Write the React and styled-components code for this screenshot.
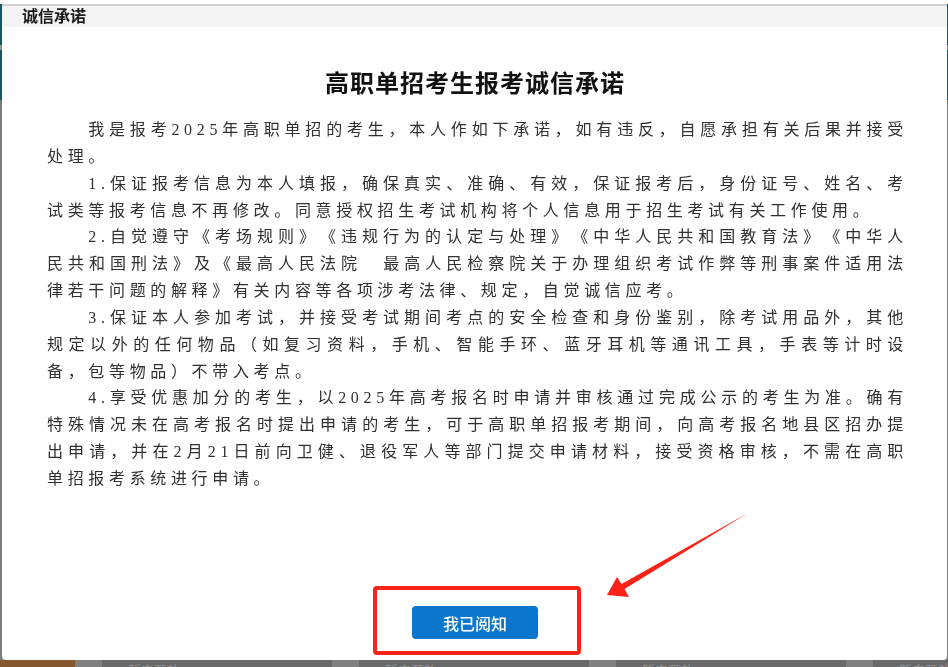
import styled, { createGlobalStyle } from "styled-components";

const GlobalStyle = createGlobalStyle`
  html, body {
    margin: 0;
    padding: 0;
    background: #ffffff;
    overflow: hidden;
  }
  * {
    box-sizing: border-box;
  }
`;

const promises = [
  "我是报考2025年高职单招的考生，本人作如下承诺，如有违反，自愿承担有关后果并接受处理。",
  "1.保证报考信息为本人填报，确保真实、准确、有效，保证报考后，身份证号、姓名、考试类等报考信息不再修改。同意授权招生考试机构将个人信息用于招生考试有关工作使用。",
  "2.自觉遵守《考场规则》《违规行为的认定与处理》《中华人民共和国教育法》《中华人民共和国刑法》及《最高人民法院\u3000最高人民检察院关于办理组织考试作弊等刑事案件适用法律若干问题的解释》有关内容等各项涉考法律、规定，自觉诚信应考。",
  "3.保证本人参加考试，并接受考试期间考点的安全检查和身份鉴别，除考试用品外，其他规定以外的任何物品（如复习资料，手机、智能手环、蓝牙耳机等通讯工具，手表等计时设备，包等物品）不带入考点。",
  "4.享受优惠加分的考生，以2025年高考报名时申请并审核通过完成公示的考生为准。确有特殊情况未在高考报名时提出申请的考生，可于高职单招报考期间，向高考报名地县区招办提出申请，并在2月21日前向卫健、退役军人等部门提交申请材料，接受资格审核，不需在高职单招报考系统进行申请。",
];

/* ---------- page behind the dialog ---------- */

const Page = styled.div`
  height: 667px;
  display: flex;
  flex-direction: column;
  background: #7e7e7e;
`;

const TopGap = styled.div`
  height: 4px;
  background: #ffffff;
`;

const NavBar = styled.div`
  height: ${(props) => props.h}px;
  background: #0f5a68;
`;

const NavDivider = styled.div`
  height: 5px;
  background: #8e8e8e;
`;

const Main = styled.div`
  flex: 1;
  background: #7e7e7e;
`;

const TileRow = styled.div`
  height: 7px;
  display: flex;
  overflow: hidden;
`;

const CountTile = styled.div`
  width: 75px;
  flex-shrink: 0;
  background: #86582f;
`;

const Tile = styled.div`
  width: 257px;
  flex-shrink: 0;
  display: flex;
`;

const TileStripe = styled.div`
  width: 27px;
  background: #808080;
`;

const TileBody = styled.div`
  flex: 1;
  background: #696969;
  padding: 2px 0 0 26px;
  color: #8e8e8e;
  font: 13px/16px "Noto Sans CJK SC", sans-serif;
`;

/* ---------- dialog ---------- */

const Overlay = styled.div`
  position: fixed;
  inset: 0;
`;

const Dialog = styled.div`
  position: absolute;
  left: 2px;
  top: 4px;
  width: 945px;
  height: 656px;
  background: #ffffff;
  border-radius: 0 0 4px 4px;
  display: flex;
  flex-direction: column;
  overflow: hidden;
`;

const TitleBar = styled.div`
  height: 23px;
  flex-shrink: 0;
  border-top: 2px solid #d0d0d0;
  background: #f3f3f3;
  padding-left: 20px;
  padding-bottom: 3px;
  display: flex;
  align-items: center;
  font: 700 16px/1 "Noto Sans CJK SC", sans-serif;
  color: #1a1a1a;
`;

const Content = styled.div`
  flex: 1;
  display: flex;
  flex-direction: column;
  padding: 39px 39px 5px 45px;
`;

const Heading = styled.h1`
  margin: 0 0 19px;
  height: 32px;
  padding-right: 5px;
  text-align: center;
  font: 700 24px/32px "Noto Sans CJK SC", sans-serif;
  letter-spacing: 1px;
  color: #111;
`;

const Para = styled.p`
  margin: 0;
  width: 861px;
  text-indent: 41.3px;
  text-align: justify;
  text-justify: inter-character;
  text-spacing-trim: space-all;
  font: 400 16px/26.85px "Liberation Serif", "Noto Sans CJK SC", serif;
  letter-spacing: 4.66px;
  color: #303030;
`;

const Footer = styled.div`
  margin-top: auto;
  display: flex;
  justify-content: center;
`;

const Highlight = styled.div`
  width: 208px;
  height: 69px;
  margin-left: -1px;
  border: 4px solid #fa2318;
  border-radius: 4px;
  display: flex;
  align-items: center;
  justify-content: center;
  padding: 4px 4px 0 0;
`;

const ConfirmButton = styled.button`
  width: 126px;
  height: 33px;
  border: none;
  border-radius: 4px;
  background: #0a77cc;
  color: #ffffff;
  font: 500 16px/1 "Noto Sans CJK SC", sans-serif;
  cursor: pointer;
`;

const ArrowLayer = styled.svg`
  position: absolute;
  left: 0;
  top: 0;
  width: 948px;
  height: 667px;
  pointer-events: none;
`;

export default function App() {
  return (
    <>
      <GlobalStyle />
      <Page>
        <TopGap />
        <NavBar h={41} />
        <NavDivider />
        <NavBar h={50} />
        <Main />
        <TileRow>
          <CountTile />
          {[0, 1, 2, 3].map((i) => (
            <Tile key={i}>
              <TileStripe />
              <TileBody>暂未开放</TileBody>
            </Tile>
          ))}
        </TileRow>
      </Page>

      <Overlay>
        <Dialog>
          <TitleBar>诚信承诺</TitleBar>
          <Content>
            <Heading>高职单招考生报考诚信承诺</Heading>
            {promises.map((text, i) => (
              <Para key={i}>{text}</Para>
            ))}
            <Footer>
              <Highlight>
                <ConfirmButton>我已阅知</ConfirmButton>
              </Highlight>
            </Footer>
          </Content>
        </Dialog>

        <ArrowLayer viewBox="0 0 948 667">
          <polygon
            points="607,595 617,577 621.5,584 748,513 624.5,589 629,597"
            fill="#fa2318"
          />
        </ArrowLayer>
      </Overlay>
    </>
  );
}
